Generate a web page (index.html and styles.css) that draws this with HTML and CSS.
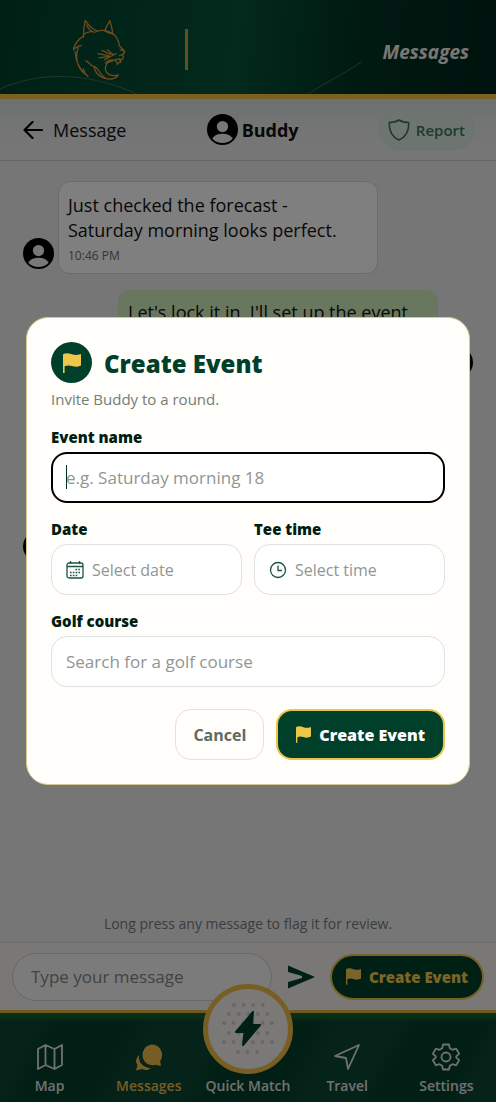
FILE: index.html
```html
<!DOCTYPE html>
<html lang="en">
<head>
<meta charset="utf-8">
<meta name="viewport" content="width=device-width, initial-scale=1">
<title>Messages</title>
<link rel="stylesheet" href="styles.css">
</head>
<body>
<svg class="sprite" aria-hidden="true">
  <symbol id="user" viewBox="0 0 32 32">
    <circle cx="16" cy="16" r="16" fill="#000"/>
    <circle cx="16" cy="13" r="5.8" class="user-fill"/>
    <path d="M5.500 25.500C8 21.500 12 20.500 16 20.500s8 1 10.500 5C23.500 28.600 20 30 16 30S8.500 28.600 5.500 25.500Z" class="user-fill"/>
  </symbol>
  <symbol id="flag" viewBox="0 0 18 20">
    <path d="M0 1.200C3-.5 6 .3 9 1.300s5.500 1 9-.3v11.500c-3.500 1.700-6 1.500-9 .6s-4.800-1-7.400.2V20H0Z" fill="currentColor"/>
  </symbol>
</svg>
<div class="app">
  <header class="topbar">
    <svg class="topbar-lines" viewBox="0 0 496 94" preserveAspectRatio="none" aria-hidden="true" fill="none">
      <path d="M0 89C40 71 88 72 137 94M308 94C325 83 342 75 361 62"/>
    </svg>
    <svg class="logo" viewBox="9 9 162 180" fill="none" aria-label="Lynx" role="img">
      <path d="M41 60C40 42 42 26 46 10C55 24 66 36 82 42M50 24C54 34 60 42 74 46M40 54C48 46 58 44 66 44M104 42C108 30 114 20 120 11C122 24 128 36 128 52M104 42L122 50M78 44C104 34 132 46 142 66C146 74 148 78 148 86L160 98L164 106L158 112L160 122L148 136L142 142L138 132C126 126 114 130 106 138M150 98L163 102M148 116L160 112M136 128L150 126L152 136M40 58C24 66 14 82 9 100C16 92 24 86 34 86M26 88C14 118 20 152 46 172L40 156M15 104C18 138 28 160 54 178M48 132C60 134 58 148 72 148C88 152 86 174 108 184C122 190 138 184 145 174C126 180 106 172 106 154C106 140 116 132 128 132M72 148C74 164 86 178 104 184M84 110L116 116M96 100L122 112M88 122C98 122 106 118 118 118M112 98L128 112M104 128L122 118M138 110L126 116"/>
    </svg>
    <span class="topbar-rule"></span>
    <h1 class="topbar-title">Messages</h1>
  </header>
  <div class="thread-head">
    <a class="back" href="#">
      <svg class="back-icon" viewBox="0 0 20 18" fill="none"><path d="M19 9H1.500M9.500 1 1.500 9l8 8"/></svg>
      <span>Message</span>
    </a>
    <div class="peer"><svg class="avatar"><use href="#user"/></svg><span>Buddy</span></div>
    <button class="report" type="button">
      <svg class="shield" viewBox="0 0 22 22" fill="none"><path d="M11 1C8 3 5 3.500 1.200 3.500 1 12 4 18 11 21 18 18 21 12 20.800 3.500 17 3.500 14 3 11 1Z"/></svg>
      <span>Report</span>
    </button>
  </div>
  <main class="chat">
    <div class="row">
      <svg class="avatar"><use href="#user"/></svg>
      <div class="bubble"><p>Just checked the forecast - Saturday morning looks perfect.</p><time>10:46 PM</time></div>
    </div>
    <div class="row mine">
      <svg class="avatar"><use href="#user"/></svg>
      <div class="bubble"><p>Let's lock it in. I'll set up the event</p></div>
    </div>
    <div class="row later">
      <svg class="avatar"><use href="#user"/></svg>
      <div class="bubble"></div>
    </div>
    <p class="hint">Long press any message to flag it for review.</p>
  </main>
  <form class="composer">
    <input class="message-input" type="text" placeholder="Type your message" aria-label="Type your message">
    <button class="send" type="button" aria-label="Send"><svg viewBox="0 0 28 24"><path d="M1 .5 28 12 1 23.500V17L15 13V11L1 7Z" fill="currentColor"/></svg></button>
    <button class="create-pill" type="button"><svg class="flag"><use href="#flag"/></svg><span>Create Event</span></button>
  </form>
  <nav class="tabs">
    <a class="tab" href="#">
      <svg viewBox="0 0 28 28" fill="none" stroke="currentColor"><path d="M2 6 9.500 2l9 4L26 2v20l-7.500 4-9-4L2 26ZM9.500 2v20M18.500 6v20"/></svg>
      <span>Map</span>
    </a>
    <a class="tab active" href="#">
      <svg viewBox="0 0 28 28" fill="currentColor"><path d="M4 12c-1 8 5 13 12 13-3 2.500-6 2.500-9 1l-6 1.500L2.500 22C0 19 1 15 4 12Z"/><path d="M16.500 1a11 11 0 0 1 9.300 17l.7 6-5-1.700A11 11 0 1 1 16.500 1Z"/></svg>
      <span>Messages</span>
    </a>
    <a class="tab quick" href="#">
      <span class="quick-disc">
        <svg viewBox="0 0 80 80">
          <path class="dots" d="M26 16H55M21 25H60M16 34H65M21 44H60M16 53H65M30 63H50"/>
          <path d="M45 23 28 43h8.500L35 56 52 36H44Z" fill="#00402a" stroke="#00402a" stroke-width="2" stroke-linejoin="round"/>
        </svg>
      </span>
      <span>Quick Match</span>
    </a>
    <a class="tab" href="#">
      <svg viewBox="0 0 28 28" fill="none" stroke="currentColor"><path d="M26 2 2 13l11 2 2 11Z"/></svg>
      <span>Travel</span>
    </a>
    <a class="tab" href="#">
      <svg viewBox="0 0 28 28" fill="none" stroke="currentColor"><circle cx="14" cy="14" r="4.500"/><path d="M11 1.500h6l.8 3.700 2.700 1.600 3.600-1.200 3 5.200-2.800 2.500v1.400l2.800 2.500-3 5.200-3.600-1.200-2.700 1.600-.8 3.700h-6l-.8-3.700-2.700-1.600-3.600 1.200-3-5.200 2.800-2.500v-1.400L.9 10.800l3-5.200 3.600 1.200 2.700-1.600Z"/></svg>
      <span>Settings</span>
    </a>
  </nav>
</div>
<div class="overlay">
  <section class="dialog" role="dialog" aria-modal="true" aria-labelledby="dialog-title">
    <div class="dialog-head">
      <span class="badge"><svg class="flag"><use href="#flag"/></svg></span>
      <h2 id="dialog-title">Create Event</h2>
    </div>
    <p class="dialog-sub">Invite Buddy to a round.</p>
    <form class="fields">
      <div class="field wide">
        <label for="event-name">Event name</label>
        <div class="control focused"><span class="caret"></span><input id="event-name" type="text" placeholder="e.g. Saturday morning 18"></div>
      </div>
      <div class="field">
        <label for="event-date">Date</label>
        <div class="control picker">
          <svg viewBox="0 0 18 18" fill="none" stroke="currentColor"><rect x="1" y="2" width="16" height="15" rx="2"/><path d="M1 5.500h16M4.500 0v3M13.500 0v3"/><path d="M9.500 8.500H15M4 11.500h11M4 14.500h8" stroke-width="1.600" stroke-dasharray="1.600 1.200"/></svg>
          <input id="event-date" type="text" placeholder="Select date">
        </div>
      </div>
      <div class="field">
        <label for="event-time">Tee time</label>
        <div class="control picker">
          <svg viewBox="0 0 18 18" fill="none" stroke="currentColor"><circle cx="9" cy="9" r="7.500"/><path d="M9 4.500v5h4"/></svg>
          <input id="event-time" type="text" placeholder="Select time">
        </div>
      </div>
      <div class="field wide">
        <label for="event-course">Golf course</label>
        <div class="control"><input id="event-course" type="text" placeholder="Search for a golf course"></div>
      </div>
      <div class="actions">
        <button class="cancel" type="button">Cancel</button>
        <button class="submit" type="button"><svg class="flag"><use href="#flag"/></svg><span>Create Event</span></button>
      </div>
    </form>
  </section>
</div>
</body>
</html>
```
FILE: styles.css
```css
* { box-sizing: border-box; }
body { margin: 0; font-family: "Open Sans", "Noto Sans", sans-serif; color: #101010; }
h1, h2, p { margin: 0; }
button, input { font: inherit; color: inherit; }
button { padding: 0; cursor: pointer; }
a { color: inherit; text-decoration: none; }
svg { display: block; flex: none; }
.sprite { position: absolute; width: 0; height: 0; }
.user-fill { fill: #f0f0f0; }
.app { min-height: 100vh; display: flex; flex-direction: column; background: #ededed; }

.topbar { position: relative; height: 99px; display: flex; align-items: center; padding: 5px 27px 0 73px; border-bottom: 5px solid #f4c044; background: linear-gradient(95deg, #00402c 0%, #065438 48%, #003424 72%, #00261c 100%); }
.topbar-lines { position: absolute; inset: 0; width: 100%; height: 100%; stroke: #3e6e56; stroke-width: 1; }
.logo { width: 54px; height: 60px; stroke: #d8963c; stroke-width: 4; stroke-linejoin: round; stroke-linecap: round; }
.topbar-rule { width: 3px; height: 41px; margin-left: 58px; background: #c4a040; }
.topbar-title { margin-left: auto; font-size: 19px; line-height: 24px; font-style: italic; font-weight: 700; color: #f4eee6; padding-top: 4px; }

.thread-head { height: 62px; display: flex; justify-content: space-between; align-items: center; padding: 0 22px 0 23px; border-bottom: 1px solid #c8c8c8; background: linear-gradient(#dce2e2, #ececec 70%); font-size: 18px; }
.back { display: flex; align-items: center; gap: 10px; }
.back-icon { width: 20px; height: 18px; stroke: #000; stroke-width: 2.2; stroke-linecap: round; stroke-linejoin: round; }
.peer { display: flex; align-items: center; gap: 4px; font-weight: 700; }
.avatar { width: 31px; height: 31px; }
.report { display: flex; align-items: center; gap: 6px; height: 40px; padding: 0 8px; border: 1px solid #d2e6da; border-radius: 20px; background: #dcebe2; color: #39785a; font-size: 15px; font-weight: 600; }
.shield { width: 22px; height: 22px; stroke: currentColor; stroke-width: 1.6; stroke-linejoin: round; }

.chat { flex: 1; display: flex; flex-direction: column; gap: 16px; padding: 20px 23px 8px; }
.row { display: flex; align-items: flex-end; gap: 4px; }
.row .avatar { margin-bottom: 5px; }
.bubble { width: 320px; min-height: 93px; padding: 11px 9px 5px; border: 1px solid #d6d6d6; border-radius: 12px; background: #fff; font-size: 18px; line-height: 25px; }
.bubble p { max-width: 280px; }
.bubble time { display: block; font-size: 12px; line-height: 25px; color: #6a6a6a; }
.mine { flex-direction: row-reverse; }
.mine .bubble { padding-top: 9px; background: #d3eebf; border-color: #cfe8bb; }
.mine .bubble p { max-width: none; }
.later { padding-top: 75px; }
.hint { margin-top: auto; text-align: center; font-size: 14px; line-height: 20px; color: #747a7e; }

.composer { height: 68px; display: flex; align-items: center; gap: 15px; padding: 0 12px; border-top: 1px solid #d8d8d8; background: #f3f0ee; }
.message-input { flex: 1; min-width: 0; height: 48px; padding: 0 18px; border: 1px solid #cfcfcf; border-radius: 24px; background: #f9f7f6; font-size: 17px; }
.message-input::placeholder { color: #848484; opacity: 1; }
.send { width: 28px; border: 0; background: none; color: #00402c; }
.create-pill { display: flex; align-items: center; gap: 8px; height: 46px; padding: 0 14px; border: 2px solid #ecc44a; border-radius: 23px; background: #00402a; color: #f2cb4e; font-size: 15px; font-weight: 800; }
.flag { width: 15px; height: 17px; }

.tabs { height: 92px; display: grid; grid-template: 100% / repeat(5, 1fr); padding-bottom: 6px; border-top: 3px solid #e0b440; background: linear-gradient(#155f31 0, #155f31 3px, transparent 9px), linear-gradient(118deg, #0a4632 0 8%, #043e2a 12% 24%, #0a4632 30% 42%, #043e2a 46% 58%, #0a4632 64% 74%, #043e2a 78% 90%, #0a4632 94%); }
.tab { display: flex; flex-direction: column; align-items: center; justify-content: flex-end; gap: 5px; font-size: 14px; line-height: 20px; font-weight: 600; color: #e0e4e0; white-space: nowrap; }
.tab > svg { width: 28px; height: 28px; stroke-width: 1.8; stroke-linejoin: round; }
.tab.active { color: #eaba48; }
.active svg path + path { stroke: #04402c; stroke-width: 1; }
.quick-disc { width: 90px; height: 90px; margin-bottom: -3px; border: 5px solid #f2bd48; border-radius: 50%; background: #f4f2f0; }
.quick-disc svg { width: 100%; height: 100%; }
.dots { fill: none; stroke: #d2d0ce; stroke-width: 4; stroke-linecap: round; stroke-dasharray: 0 9.6; }

.overlay { position: fixed; inset: 0; display: grid; align-items: center; padding: 0 26px; background: rgba(0, 0, 0, 0.5); }
.dialog { padding: 24px; border: 1px solid #d8c890; border-radius: 22px; background: #fffefa; }
.dialog-head { display: flex; align-items: center; gap: 12px; }
.badge { width: 41px; height: 41px; display: grid; place-items: center; border-radius: 50%; background: #00402a; color: #edc64a; }
.badge .flag { width: 18px; height: 20px; }
.dialog h2 { font-size: 24px; line-height: 32px; font-weight: 800; color: #00402a; padding-top: 3px; }
.dialog-sub { margin: 6px 0 18px; font-size: 15px; line-height: 20px; color: #747c76; }
.fields { display: grid; grid-template-columns: 1fr 1fr; gap: 16px 12px; }
.wide, .actions { grid-column: 1 / -1; }
.field label { display: block; margin-bottom: 5px; font-size: 15px; line-height: 20px; font-weight: 800; color: #001e12; }
.control { position: relative; display: flex; align-items: center; gap: 8px; height: 51px; padding: 0 14px; border: 1px solid #e0e2de; border-radius: 16px; background: #fff; }
.control input { flex: 1; width: 100%; min-width: 0; height: 100%; padding: 0; border: 0; outline: 0; background: none; font-size: 17px; }
.control input::placeholder { color: #909692; opacity: 1; }
.control svg { width: 18px; height: 18px; color: #1c5442; stroke-width: 1.3; }
.control.picker input { font-size: 16px; }
.control.focused { border: 2px solid #000; padding: 0 13px; }
.caret { position: absolute; left: 13px; top: 11px; width: 1px; height: 24px; background: #00301e; }
.actions { display: flex; justify-content: flex-end; gap: 12px; padding-top: 6px; }
.cancel, .submit { display: flex; align-items: center; height: 51px; border-radius: 16px; font-size: 16px; }
.cancel { padding: 0 17px; border: 1px solid #e0e2de; background: #fffefa; color: #5c6c62; font-weight: 700; }
.submit { gap: 8px; padding: 0 18px; border: 2px solid #e8c64c; background: #00402a; color: #fff; font-weight: 800; }
.submit .flag { color: #edc64a; }
```
